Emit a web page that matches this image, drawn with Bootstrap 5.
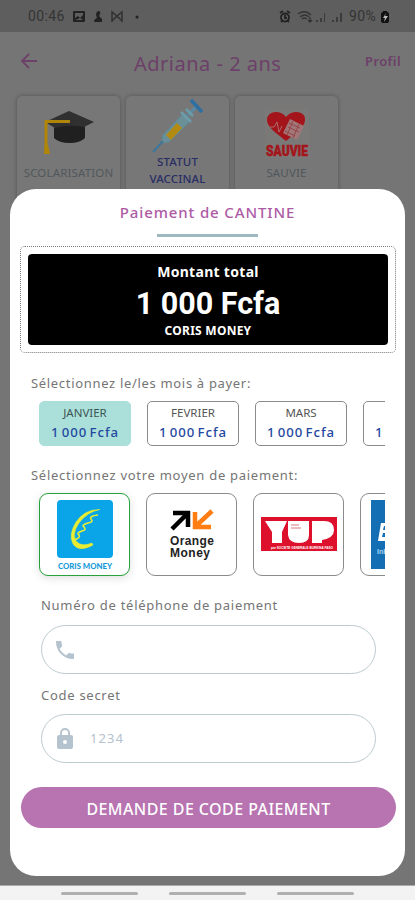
<!DOCTYPE html>
<html lang="fr">
<head>
<meta charset="utf-8">
<meta name="viewport" content="width=device-width, initial-scale=1">
<title>Paiement de CANTINE</title>
<link href="https://cdn.jsdelivr.net/npm/bootstrap@5.3.0/dist/css/bootstrap.min.css" rel="stylesheet">
<style>
body{font-family:"Noto Sans",sans-serif;background:#757575;height:900px;white-space:nowrap;line-height:1.2}
svg{display:block;flex:none}
.phone{height:900px;width:415px}
.status{height:32px;background:#5e5e5e;color:#343434;font-family:Roboto,sans-serif;font-size:14px;padding:1px 25px 0 28px}
.appbar{height:58px;padding:0 14px 0 20px;color:#6d4069}
.apptitle{font-size:20px;letter-spacing:.5px;padding:5px 0 0}
.profil{font-size:13px;font-weight:600;letter-spacing:.4px;padding-top:2px}
.tiles{padding:6px 17px;gap:6px}
.tile{width:103px;height:120px;border-radius:5px;background:#777;box-shadow:0 0 4px rgba(0,0,0,.3);font-size:11.5px;color:#51585c;letter-spacing:.15px}
.tile-blue{color:#292d66;font-weight:500;line-height:17px}
.sheet{left:10px;top:189px;width:395px;height:687px;border-radius:26px;padding:0 10px}
.sheet-title{height:45px;font-size:15px;letter-spacing:.88px;color:#ad5ba5;font-weight:500;padding-top:1px}
.rule{width:101px;height:3px;background:#9fb8bf}
.ticket{height:107px;width:376px;margin-top:9px;border:1.5px dotted #777;border-radius:5px;padding:7px}
.total{height:91px;border-radius:4px;background:#000;color:#fff;padding-top:9px}
.total-label{font-size:14px;font-weight:700;line-height:18px;letter-spacing:.3px}
.amount{font-family:Roboto,sans-serif;font-weight:700;font-size:30.5px;line-height:32px;margin-top:7px}
.operator{font-size:12px;font-weight:700;line-height:16px;margin-top:3px;letter-spacing:.25px}
.caption{color:#757575;font-size:13px;line-height:20px;padding-left:11px}
.strip{gap:16px;margin-left:19px;width:346px}
.month{width:92px;height:45px;flex:none;border:1.5px solid #8b8b8b;border-radius:5px;font-size:11.5px;line-height:18px;color:#555;padding-top:2px}
.month strong{font-size:13.2px;font-weight:500;color:#2448a0;letter-spacing:.95px;word-spacing:-2px;line-height:20px}
.month.chosen{background:#abe0da;border-color:#abe0da;color:#3d5553}
.pay{width:91px;height:83px;flex:none;border:1.5px solid #8b8b8b;border-radius:9px;background:#fff}
.pay.chosen{border-color:#27a239;box-shadow:0 2px 9px rgba(0,0,0,.13)}
.field{width:335px;height:49px;margin-left:21px;border:1.2px solid #bccbcf;border-radius:25px;padding:0 11px;gap:13px;color:#b4c3cd;font-size:13px;letter-spacing:1.1px}
.field-label{padding-left:21px;letter-spacing:.72px}
.cta{height:41px;width:375px;margin:24px 0 0 1px;border-radius:21px;background:#b873b1;color:#fff;font-size:16px;font-weight:500;letter-spacing:.43px;padding:2px 0 0}
.sysnav{height:15px;background:#f3f3f3;padding:0 61px;border-top:1px solid #aaa}
.sysnav span{width:77px;height:3px;border-radius:2px;background:#b0b0b0}
</style>
<script src="https://cdn.jsdelivr.net/npm/bootstrap@5.3.0/dist/js/bootstrap.bundle.min.js"></script>
</head>
<body>
<div class="phone position-relative overflow-hidden d-flex flex-column">
  <div class="status d-flex align-items-center">
    <span style="letter-spacing:.4px">00:46</span>
    <svg class="ms-2" width="70" height="16" viewBox="0 0 70 16"><path fill="#222" fill-rule="evenodd" d="M1 2h10q1 0 1 1v9q0 1-1 1H1q-1 0-1-1V3q0-1 1-1m1 2v5l3-2 2 2 3-3V4zm0 7h8l-3-2-2 1zM25 2a2 2 0 0 1 2 3l-1 2 3 3v3h-8q0-3 3-4l-1-3q0-3 2-4"/><path d="M39 13V3l5 4 5-4v10M39 12l5-5 5 5" fill="none" stroke="#333" stroke-width="1.6"/><circle cx="64" cy="8" r="1.5" fill="#222"/></svg>
    <svg class="ms-auto" width="65" height="16" viewBox="0 0 65 16"><g fill="none" stroke="#222" stroke-width="1.8"><circle cx="6" cy="8.500" r="4"/><path d="M6 6v3h2M1 4l3-2M11 4L8 2M2 13l2-2M10 13l-2-2"/></g><g fill="none" stroke="#333" stroke-width="1.3"><path d="M19 5q7-5 13 1M21 8q5-4 9 0M23 10q2-2 5 0"/><path d="M31 8v5M29 11l2 2 2-2" /></g><path d="M37 11h2v2h-2zM41 9h2v4h-2zM45 4h1v9h-1zM53 11h2v2h-2zM57 8h2v5h-2zM61 4h2v9h-2z" fill="#3b3b3b"/></svg>
    <span style="margin-left:5px;letter-spacing:.3px">90%</span>
    <svg style="margin-left:4px" width="10" height="14" viewBox="0 0 10 14"><path d="M3 1h4v1q2 0 2 2v7q0 2-2 2H3q-2 0-2-2V4q0-2 2-2z" fill="#111"/><path d="M6 3L3 8h2l-1 4 4-6H5z" fill="#bbb"/></svg>
  </div>
  <div class="appbar d-flex align-items-center">
    <svg width="18" height="18" viewBox="0 0 18 18"><path d="M17 9H2M9 2L2 9l7 7" fill="none" stroke="#6d4069" stroke-width="1.8"/></svg>
    <div class="apptitle" style="margin-left:96px">Adriana - 2 ans</div>
    <div class="profil ms-auto">Profil</div>
  </div>
  <div class="tiles d-flex">
    <div class="tile d-flex flex-column align-items-center">
      <svg style="margin-top:14px" width="52" height="47" viewBox="0 0 52 47"><path d="M11 14h31v14q-5 5-15.500 5T11 28z" fill="#202020"/><path d="M26 1l25 11-10 5q-15-3-29 1L2 12z" fill="#303030"/><path d="M27 11.500H3V36" fill="none" stroke="#b08609" stroke-width="3"/><path d="M1.500 35h3.500l2 9H1z" fill="#b08609"/></svg>
      <div style="margin-top:9px">SCOLARISATION</div>
    </div>
    <div class="tile tile-blue d-flex flex-column align-items-center">
      <svg style="margin-top:3px" width="52" height="54" viewBox="0 0 52 54"><path d="M1 53l12-13" stroke="#3c769c" stroke-width="2"/><path d="M10 41l1-5 21-22 7 7-21 21-5 2z" fill="#6b8f97" stroke="#5b8c9a"/><path d="M14 36l11-12 5 5-11 12z" fill="#b48b12"/><path d="M36 16l9-9" stroke="#598ba5" stroke-width="3"/><path d="M29 13l10 10M34 10l7 7" stroke="#6b9caa" stroke-width="2.500"/><path d="M39 1l11 12" stroke="#2c6fa2" stroke-width="3.500"/></svg>
      <div class="text-center">STATUT<br>VACCINAL</div>
    </div>
    <div class="tile d-flex flex-column align-items-center">
      <svg style="margin-top:13px" width="44" height="50" viewBox="0 0 44 50"><path d="M0 0h44v49H0z" fill="#7b7878"/><path d="M21 32C14 26 2 19 2 11 2 2 15 0 21 8c6-8 20-6 19 3 0 8-12 15-19 21" fill="#a3151a"/><path d="M25 10l14 7-7 14-14-7z" fill="#9f7778"/><path d="M24 14l11 5M23 18l11 5M20 22l10 5M28 12l-6 14M34 15l-6 14" stroke="#98383c" stroke-width=".8"/><path d="M5 18h4l3-5 2 10 3-6" fill="none" stroke="#ad6d6d"/><text x="22" y="47" text-anchor="middle" textLength="42" lengthAdjust="spacingAndGlyphs" font-family="Roboto" font-weight="900" font-size="15" stroke="#a3151a" stroke-width=".5" letter-spacing="0" fill="#a3151a">SAUVIE</text></svg>
      <div style="margin-top:7px">SAUVIE</div>
    </div>
  </div>

  <main class="sheet position-absolute bg-white">
    <div class="sheet-title d-flex align-items-center justify-content-center">Paiement de CANTINE</div>
    <div class="rule mx-auto"></div>
    <div class="ticket"><div class="total text-center">
      <div class="total-label">Montant total</div>
      <div class="amount">1 000 Fcfa</div>
      <div class="operator">CORIS MONEY</div>
    </div></div>
    <div class="caption" style="margin-top:20px;letter-spacing:.68px">Sélectionnez le/les mois à payer:</div>
    <div class="strip d-flex overflow-hidden" style="margin-top:8px">
      <div class="month chosen text-center">JANVIER<br><strong>1 000 Fcfa</strong></div>
      <div class="month text-center">FEVRIER<br><strong>1 000 Fcfa</strong></div>
      <div class="month text-center">MARS<br><strong>1 000 Fcfa</strong></div>
      <div class="month text-center"><br><strong>1 000 Fcfa</strong></div>
    </div>
    <div class="caption" style="margin-top:19px;letter-spacing:.72px">Sélectionnez votre moyen de paiement:</div>
    <div class="strip d-flex overflow-hidden" style="padding:8px 0 12px 10px;margin-left:9px;width:356px">
      <div class="pay chosen d-flex justify-content-center"><svg width="88" height="80" viewBox="0 0 88 80"><rect x="16" y="6" width="56" height="58" rx="4" fill="#0aa4e8"/><path d="M59 15.500Q44 15 35 28q-8 13-3 22 6 9 20 1l-1-2q-10 4-15-1-6-7 2-19 8-11 21-13.500" fill="#e9ed32" stroke="#e9ed32" stroke-width=".5"/><path d="M57 21q-9 1-7 4 3 3-3 4-7 2-4 4 3 3-2 4-6 2-3 4 2 3-5 5" fill="none" stroke="#e9ed32" stroke-width="1.600"/><text x="44" y="75" text-anchor="middle" textLength="54" lengthAdjust="spacingAndGlyphs" font-family="Lato" font-weight="900" font-size="7" fill="#1599da">CORIS MONEY</text></svg></div>
      <div class="pay d-flex justify-content-center"><svg width="88" height="80" viewBox="0 0 88 80"><path d="M24 35l15-15M25 19h15v14" fill="none" stroke="#000" stroke-width="4.500"/><path d="M64 17L49 31M47 18v15h16" fill="none" stroke="#ff7d12" stroke-width="4.500"/><g font-family="Liberation Sans" font-weight="700" font-size="12" fill="#222"><text x="22" y="51" textLength="44">Orange</text><text x="22" y="63" textLength="40">Money</text></g></svg></div>
      <div class="pay d-flex justify-content-center"><svg width="88" height="80" viewBox="0 0 88 80"><path d="M6 23h76v34H6z" fill="#dd112c"/><path d="M10 27h22l-5 11v11H17V38zM33 27h21v14q0 8-10 8t-11-8z" fill="#fff"/><path d="M57 27h12q10 0 10 9 0 8-12 10v3H57z" fill="#fff"/><path d="M36 31h8M36 34h10" stroke="#dd7783"/><text x="16" y="54.500" textLength="62" lengthAdjust="spacingAndGlyphs" font-family="Liberation Sans" font-size="4" font-weight="700" fill="#fff">par SOCIETE GENERALE BURKINA FASO</text></svg></div>
      <div class="pay"><svg width="88" height="80" viewBox="0 0 88 80"><path d="M10 6h69v69H10z" fill="#146eb4"/><path d="M20 29h18v18H17z" fill="#fff"/><path d="M23 32h8v4h-9zM22 39h8v4h-9z" fill="#146eb4"/><text x="16" y="60" font-family="Liberation Sans" font-weight="700" font-size="7" fill="#a8d1ee">InB</text></svg></div>
    </div>
    <div class="caption field-label" style="margin-top:7px">Numéro de téléphone de paiement</div>
    <div class="field d-flex align-items-center" style="margin-top:10px"><svg width="24" height="24" viewBox="0 0 24 24"><path fill="#b4c3cd" d="M6.600 10.800c1.400 2.800 3.800 5.100 6.600 6.600l2.200-2.200c.3-.3.700-.4 1-.2 1.100.4 2.300.6 3.600.6.600 0 1 .4 1 1V20c0 .6-.4 1-1 1C10.600 21 3 13.400 3 4c0-.6.400-1 1-1h3.500c.6 0 1 .4 1 1 0 1.300.2 2.500.6 3.600.1.400 0 .7-.2 1z"/></svg></div>
    <div class="caption field-label" style="margin-top:11px">Code secret</div>
    <div class="field d-flex align-items-center" style="margin-top:9px"><svg width="24" height="24" viewBox="0 0 24 24"><path fill="#b4c3cd" d="M18 8h-1V6A5 5 0 0 0 7 6v2H6a2 2 0 0 0-2 2v10q0 2 2 2h12q2 0 2-2V10a2 2 0 0 0-2-2m-6 9a2 2 0 1 1 0-4 2 2 0 0 1 0 4m3.100-9H8.900V6a3.100 3.100 0 0 1 6.200 0z"/></svg><span>1234</span></div>
    <button class="cta btn border-0">DEMANDE DE CODE PAIEMENT</button>
  </main>
  <div class="sysnav mt-auto d-flex align-items-center justify-content-between"><span></span><span></span><span></span></div>
</div>
</body>
</html>
